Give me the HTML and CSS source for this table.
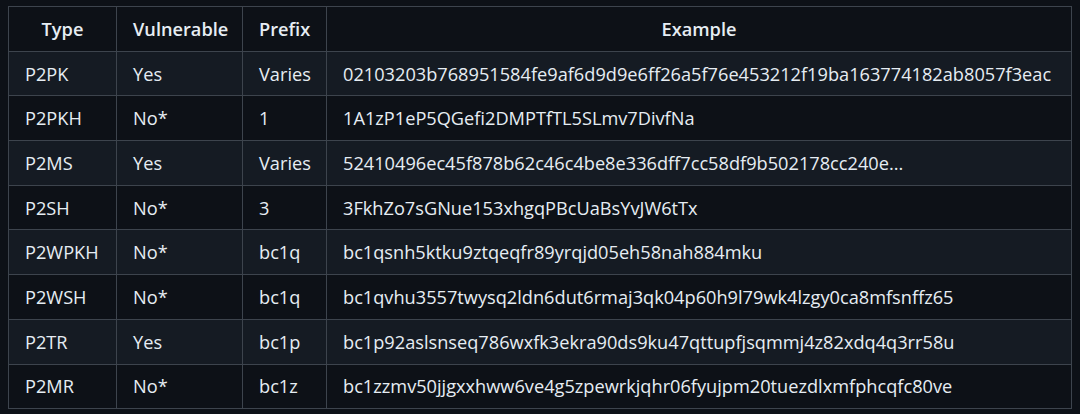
FILE: index.html
```html
<!DOCTYPE html>
<html lang="en">
<head>
    <meta charset="UTF-8">
    <title>Address types</title>
    <link rel="stylesheet" href="styles.css">
</head>
<body>
    <table class="types">
        <colgroup>
            <col class="c-type">
            <col class="c-vuln">
            <col class="c-prefix">
            <col class="c-example">
        </colgroup>
        <thead>
            <tr>
                <th>Type</th>
                <th>Vulnerable</th>
                <th>Prefix</th>
                <th>Example</th>
            </tr>
        </thead>
        <tbody>
            <tr><td>P2PK</td><td>Yes</td><td>Varies</td><td>02103203b768951584fe9af6d9d9e6ff26a5f76e453212f19ba163774182ab8057f3eac</td></tr>
            <tr><td>P2PKH</td><td>No*</td><td>1</td><td>1A1zP1eP5QGefi2DMPTfTL5SLmv7DivfNa</td></tr>
            <tr><td>P2MS</td><td>Yes</td><td>Varies</td><td>52410496ec45f878b62c46c4be8e336dff7cc58df9b502178cc240e...</td></tr>
            <tr><td>P2SH</td><td>No*</td><td>3</td><td>3FkhZo7sGNue153xhgqPBcUaBsYvJW6tTx</td></tr>
            <tr><td>P2WPKH</td><td>No*</td><td>bc1q</td><td>bc1qsnh5ktku9ztqeqfr89yrqjd05eh58nah884mku</td></tr>
            <tr><td>P2WSH</td><td>No*</td><td>bc1q</td><td>bc1qvhu3557twysq2ldn6dut6rmaj3qk04p60h9l79wk4lzgy0ca8mfsnffz65</td></tr>
            <tr><td>P2TR</td><td>Yes</td><td>bc1p</td><td>bc1p92aslsnseq786wxfk3ekra90ds9ku47qttupfjsqmmj4z82xdq4q3rr58u</td></tr>
            <tr><td>P2MR</td><td>No*</td><td>bc1z</td><td>bc1zzmv50jjgxxhww6ve4g5zpewrkjqhr06fyujpm20tuezdlxmfphcqfc80ve</td></tr>
        </tbody>
    </table>
</body>
</html>
```

FILE: styles.css
```css
html{
    background-color: #0d1117;
}
body{
    margin: 6px 8px;
    font-family: "Open Sans", "Noto Sans", sans-serif;
    font-size: 18.2px;
    color: #e6edf3;
}
.types{
    border-collapse: collapse;
    table-layout: fixed;
    width: 1064px;
}
.c-type{ width: 108px; }
.c-vuln{ width: 126px; }
.c-prefix{ width: 84px; }
.types th,
.types td{
    border: 1px solid #3d444d;
    height: 43.7px;
    padding: 0 16px;
    white-space: nowrap;
}
.types th{
    font-weight: 600;
    text-align: center;
}
.types td{
    text-align: left;
}
.types tbody tr:nth-child(odd){
    background-color: #151b23;
}
```
